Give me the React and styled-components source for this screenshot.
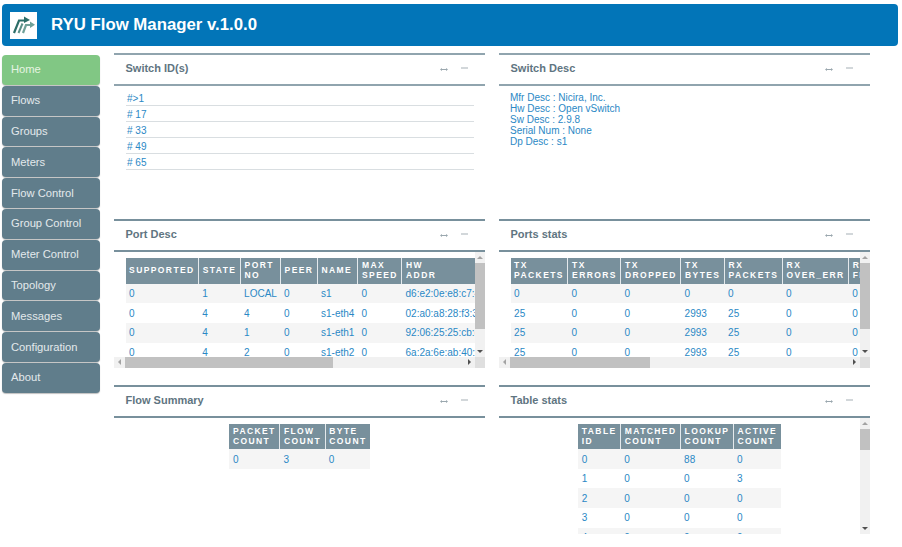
import React from "react";
import styled, { createGlobalStyle } from "styled-components";

const Global = createGlobalStyle`
  html, body {
    margin: 0;
    padding: 0;
    background: #fff;
    font-family: "Liberation Sans", Arial, sans-serif;
  }
`;

const Page = styled.div`
  width: 902px;
  height: 547px;
  overflow: hidden;
  box-sizing: border-box;
  padding: 4px 4px 0 2px;
`;
const Header = styled.header`
  height: 42px;
  background: #0275b8;
  border-radius: 4px;
  display: flex;
  align-items: center;
  padding-left: 8px;
  gap: 14px;
`;
const LogoBox = styled.div`
  width: 27px;
  height: 27px;
  background: #fff;
  display: flex;
`;
const Title = styled.h1`
  margin: 0;
  font-size: 16.8px;
  font-weight: 700;
  color: #fff;
`;
const Main = styled.div`
  display: flex;
  margin-top: 7px;
`;
const Sidebar = styled.nav`
  width: 98px;
  margin-top: 2px;
  margin-right: 14px;
  display: flex;
  flex-direction: column;
  gap: 1px;
`;
const NavButton = styled.a`
  height: 29.8px;
  box-sizing: border-box;
  padding: 0 0 1px 9px;
  display: flex;
  align-items: center;
  font-size: 11.2px;
  color: ${(p) => (p.$active ? "#e6f4e2" : "#e3e9ec")};
  background: ${(p) => (p.$active ? "#81c784" : "#607d8b")};
  border-radius: 4px;
  box-shadow: 0 1px 1px rgba(0, 0, 0, 0.25);
`;
const Panels = styled.div`
  display: grid;
  grid-template-columns: 371px 371px;
  grid-auto-rows: 166px;
  column-gap: 14px;
`;
const Panel = styled.section`
  display: flex;
  flex-direction: column;
  min-height: 0;
`;
const PanelHead = styled.div`
  height: 33px;
  box-sizing: border-box;
  flex: none;
  border-top: 2px solid ${(p) => (p.$muted ? "#90a4ae" : "#78909c")};
  border-bottom: 2px solid ${(p) => (p.$muted ? "#90a4ae" : "#78909c")};
  display: flex;
  align-items: center;
  justify-content: space-between;
  padding: 0 17px 3px 11.5px;
`;
const PanelTitle = styled.h2`
  margin: 0;
  font-size: 11px;
  font-weight: 700;
  color: #5f7581;
`;
const PanelTools = styled.div`
  display: flex;
  align-items: center;
  gap: 13px;
  margin-top: 3px;
`;
const PanelBody = styled.div`
  height: 116px;
  flex: none;
  box-sizing: border-box;
  overflow: hidden;
  padding: 6px 11px 0 11.5px;
  font-size: 10px;
  color: #2a88c5;
`;
const CenterBody = styled(PanelBody)`
  display: flex;
  justify-content: center;
  align-items: flex-start;
  padding-top: 5.5px;
  padding-right: ${(p) => (p.$withBar ? "21.5px" : "11px")};
`;
const ScrollFrame = styled.div`
  position: relative;
  height: 116px;
  overflow: hidden;
`;
const VBar = styled.div`
  position: absolute;
  top: 0;
  right: 0;
  bottom: ${(p) => (p.$corner ? "11px" : "0")};
  width: 10.5px;
  background: #f1f1f1;
  display: flex;
  flex-direction: column;
`;
const HBar = styled.div`
  position: absolute;
  left: 0;
  right: 10.5px;
  bottom: 0;
  height: 11px;
  background: #f1f1f1;
  display: flex;
`;
const Corner = styled.div`
  position: absolute;
  right: 0;
  bottom: 0;
  width: 10.5px;
  height: 11px;
  background: #dfdfdf;
`;
const VThumb = styled.div`
  width: 100%;
  height: ${(p) => p.$size}px;
  background: #c1c1c1;
`;
const HThumb = styled.div`
  height: 100%;
  width: ${(p) => p.$size}px;
  background: #c1c1c1;
`;
const Spacer = styled.div`
  flex: 1;
`;
const BarButton = styled.div`
  flex: none;
  width: 10.5px;
  height: 10.5px;
  display: flex;
  align-items: center;
  justify-content: center;
  &::before {
    content: "";
    border-style: solid;
    border-color: transparent;
    border-width: 3px;
    ${(p) => p.$dir === "up" && `border-bottom-color: ${p.$dim ? "#a3a3a3" : "#505050"}; border-top-width: 0;`}
    ${(p) => p.$dir === "down" && `border-top-color: ${p.$dim ? "#a3a3a3" : "#505050"}; border-bottom-width: 0;`}
    ${(p) => p.$dir === "left" && `border-right-color: ${p.$dim ? "#a3a3a3" : "#505050"}; border-left-width: 0;`}
    ${(p) => p.$dir === "right" && `border-left-color: ${p.$dim ? "#a3a3a3" : "#505050"}; border-right-width: 0;`}
  }
`;
const SwitchRow = styled.div`
  height: 16px;
  box-sizing: border-box;
  padding: 2px 0 0 1.5px;
  border-bottom: 1px solid #d9dee1;
  line-height: 13px;
  font-size: 10px;
`;
const SwitchList = styled.div`
  margin-top: -2.5px;
`;
const DescList = styled.div`
  margin: -0.5px 0 0 -0.5px;
`;
const DescLine = styled.div`
  font-size: 10px;
  line-height: 11.2px;
`;
const Table = styled.table`
  border-collapse: collapse;
  flex: none;
`;
const Th = styled.th`
  background: #78909c;
  color: #fff;
  font-size: 8.5px;
  line-height: 10px;
  font-weight: 700;
  letter-spacing: 1.4px;
  text-transform: uppercase;
  text-align: left;
  padding: 2.4px 3.6px 3.4px;
  height: 20px;
  border-left: 1px solid #e4e9ec;
  white-space: pre-line;
  &:first-child {
    border-left: 0;
  }
`;
const Td = styled.td`
  font-size: 10px;
  padding: 0 3.6px;
  height: 19.6px;
  white-space: nowrap;
  color: #2a88c5;
`;
const Tr = styled.tr`
  &:nth-child(odd) {
    background: #f5f5f5;
  }
`;

function DataTable({ cols, rows }) {
  return (
    <Table>
      <thead>
        <tr>
          {cols.map((c) => (
            <Th key={c}>{c}</Th>
          ))}
        </tr>
      </thead>
      <tbody>
        {rows.map((r, i) => (
          <Tr key={i}>
            {r.map((v, j) => (
              <Td key={j}>{v}</Td>
            ))}
          </Tr>
        ))}
      </tbody>
    </Table>
  );
}

function Card({ title, muted, children }) {
  return (
    <Panel>
      <PanelHead $muted={muted}>
        <PanelTitle>{title}</PanelTitle>
        <PanelTools>
          <svg width="8" height="5" viewBox="0 0 8 5" fill="none">
            <path d="M1 2.5 H7" stroke="#9aa7ae" strokeWidth="1" />
            <path d="M0 2.5 L2 1 V4 Z M8 2.5 L6 1 V4 Z" fill="#9aa7ae" />
          </svg>
          <svg width="7" height="5" viewBox="0 0 7 5" fill="none">
            <path d="M0 1 H7" stroke="#b4bdc2" strokeWidth="1.2" />
          </svg>
        </PanelTools>
      </PanelHead>
      {children}
    </Panel>
  );
}

// the page draws its own scrollbars, one thumb size per table
function ScrollBars({ vThumb, hThumb }) {
  return (
    <>
      <VBar $corner={hThumb !== undefined}>
        <BarButton $dir="up" $dim />
        <VThumb $size={vThumb} />
        <Spacer />
        <BarButton $dir="down" />
      </VBar>
      {hThumb !== undefined && (
        <>
          <HBar>
            <BarButton $dir="left" $dim />
            <HThumb $size={hThumb} />
            <Spacer />
            <BarButton $dir="right" />
          </HBar>
          <Corner />
        </>
      )}
    </>
  );
}

const nav = ["Home", "Flows", "Groups", "Meters", "Flow Control", "Group Control", "Meter Control", "Topology", "Messages", "Configuration", "About"];

const portCols = ["Supported", "State", "Port\nNo", "Peer", "Name", "Max\nSpeed", "HW\nAddr"];
const portRows = [
  [0, 1, "LOCAL", 0, "s1", 0, "d6:e2:0e:e8:c7:4a"],
  [0, 4, 4, 0, "s1-eth4", 0, "02:a0:a8:28:f3:3c"],
  [0, 4, 1, 0, "s1-eth1", 0, "92:06:25:25:cb:e1"],
  [0, 4, 2, 0, "s1-eth2", 0, "6a:2a:6e:ab:40:c7"],
];

const statCols = ["TX\nPackets", "TX\nErrors", "TX\nDropped", "TX\nBytes", "RX\nPackets", "RX\nOver_Err", "RX\nFrame_Err"];
const statRows = [
  [0, 0, 0, 0, 0, 0, 0],
  [25, 0, 0, 2993, 25, 0, 0],
  [25, 0, 0, 2993, 25, 0, 0],
  [25, 0, 0, 2993, 25, 0, 0],
];

const tableRows = Array.from({ length: 5 }, (_, i) => [i, 0, i === 0 ? 88 : 0, i === 1 ? 3 : 0]);

export default function App() {
  return (
    <Page>
      <Global />
      <Header>
        <LogoBox>
          <svg width="27" height="27" viewBox="0 0 27 27" fill="none">
            <path d="M4 21 L9 8.5 H15" stroke="#2c6e68" strokeWidth="2.2" />
            <path d="M8.5 21 L12.5 11.5" stroke="#5b9088" strokeWidth="2" />
            <path d="M13 21 L16 13 H21" stroke="#6fa198" strokeWidth="2.2" />
            <path d="M14 4.5 L20 8 L14 11 Z" fill="#2c6e68" />
            <path d="M20 9.5 L25 12.8 L20 16 Z" fill="#6fa198" />
          </svg>
        </LogoBox>
        <Title>RYU Flow Manager v.1.0.0</Title>
      </Header>
      <Main>
        <Sidebar>
          {nav.map((n, i) => (
            <NavButton key={n} $active={i === 0}>
              {n}
            </NavButton>
          ))}
        </Sidebar>
        <Panels>
          <Card title="Switch ID(s)" muted>
            <PanelBody>
              <SwitchList>
                <SwitchRow>#&gt;1</SwitchRow>
                <SwitchRow># 17</SwitchRow>
                <SwitchRow># 33</SwitchRow>
                <SwitchRow># 49</SwitchRow>
                <SwitchRow># 65</SwitchRow>
              </SwitchList>
            </PanelBody>
          </Card>
          <Card title="Switch Desc" muted>
            <PanelBody>
              <DescList>
                <DescLine>Mfr Desc : Nicira, Inc.</DescLine>
                <DescLine>Hw Desc : Open vSwitch</DescLine>
                <DescLine>Sw Desc : 2.9.8</DescLine>
                <DescLine>Serial Num : None</DescLine>
                <DescLine>Dp Desc : s1</DescLine>
              </DescList>
            </PanelBody>
          </Card>
          <Card title="Port Desc">
            <ScrollFrame>
              <PanelBody>
                <DataTable cols={portCols} rows={portRows} />
              </PanelBody>
              <ScrollBars vThumb={66} hThumb={208} />
            </ScrollFrame>
          </Card>
          <Card title="Ports stats">
            <ScrollFrame>
              <PanelBody>
                <DataTable cols={statCols} rows={statRows} />
              </PanelBody>
              <ScrollBars vThumb={66} hThumb={140} />
            </ScrollFrame>
          </Card>
          <Card title="Flow Summary">
            <CenterBody>
              <DataTable cols={["Packet\nCount", "Flow\nCount", "Byte\nCount"]} rows={[[0, 3, 0]]} />
            </CenterBody>
          </Card>
          <Card title="Table stats">
            <ScrollFrame>
              <CenterBody $withBar>
                <DataTable cols={["Table\nID", "Matched\nCount", "Lookup\nCount", "Active\nCount"]} rows={tableRows} />
              </CenterBody>
              <ScrollBars vThumb={21} />
            </ScrollFrame>
          </Card>
        </Panels>
      </Main>
    </Page>
  );
}
